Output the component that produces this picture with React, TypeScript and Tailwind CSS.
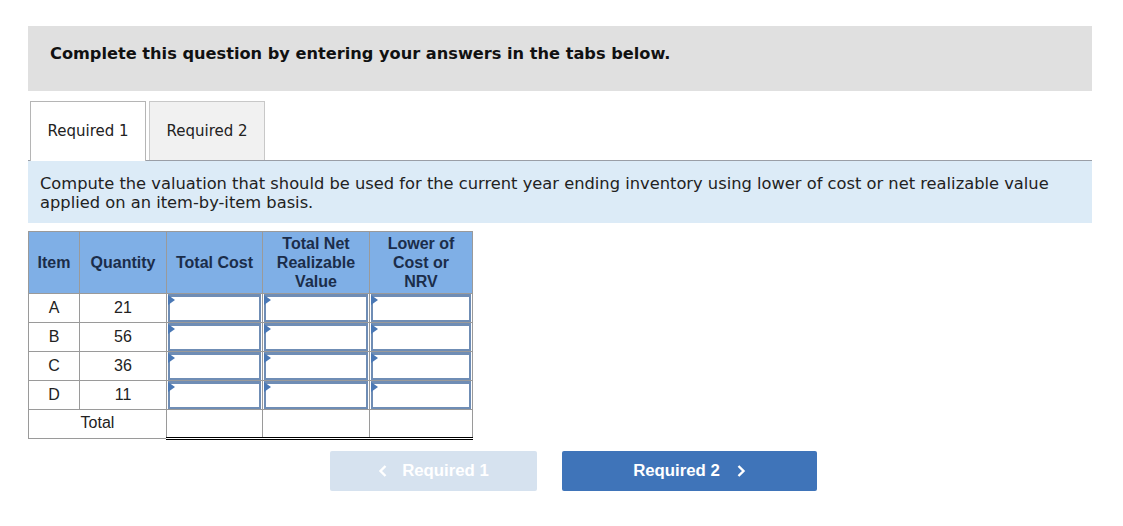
import React from "react";

const rows = [
  { item: "A", qty: "21" },
  { item: "B", qty: "56" },
  { item: "C", qty: "36" },
  { item: "D", qty: "11" },
];

function InputCell() {
  return (
    <td className="border border-[#9a9a9a] p-0 h-[29px] align-top">
      <div className="relative h-[28px] mx-[1px] border-2 border-t-[3px] border-[#6f8db5] bg-white">
        <div className="absolute left-[-2px] top-[-2px] w-0 h-0 border-t-[5px] border-b-[5px] border-l-[7px] border-t-transparent border-b-transparent border-l-[#4a78b5]" />
      </div>
    </td>
  );
}

export default function App() {
  return (
    <div className="w-[1123px] h-[526px] bg-white relative" style={{ fontFamily: "'DejaVu Sans', Verdana, sans-serif" }}>
      <div className="pt-[26px] pl-[28px] w-[1092px]">
        <div className="h-[65px] bg-[#e0e0e0] pl-[22px] pt-[16px]">
          <span className="font-bold text-[16.2px] text-[#111]">Complete this question by entering your answers in the tabs below.</span>
        </div>

        <div className="mt-[10px] flex border-b border-[#9a9ea6] pl-[2px] h-[60px]">
          <div className="w-[116px] h-[60px] bg-white border border-b-0 border-[#b5b5b5] flex items-center justify-center text-[15px] text-[#222] mb-[-1px]">
            Required 1
          </div>
          <div className="ml-[3px] w-[116px] h-[59px] bg-[#f1f1f1] border border-b-0 border-[#c8c8c8] flex items-center justify-center text-[15px] text-[#222]">
            Required 2
          </div>
        </div>

        <div className="bg-[#dcebf7] h-[62px] pl-[12px] pt-[13px] text-[16.3px] leading-[19px] text-[#222]">
          Compute the valuation that should be used for the current year ending inventory using lower of cost or net realizable value
          <br />
          applied on an item-by-item basis.
        </div>

        <div className="mt-[8px]" style={{ fontFamily: "'Liberation Sans', Arial, sans-serif" }}>
          <table className="border-collapse text-[16px] text-[#222]">
            <colgroup>
              <col className="w-[51px]" />
              <col className="w-[87px]" />
              <col className="w-[96px]" />
              <col className="w-[107px]" />
              <col className="w-[103px]" />
            </colgroup>
            <thead>
              <tr className="bg-[#7fafe6] h-[62px] font-bold text-[#1b2d4a] leading-[19px]">
                <th className="border border-[#9a9a9a] font-bold p-0">Item</th>
                <th className="border border-[#9a9a9a] font-bold p-0">Quantity</th>
                <th className="border border-[#9a9a9a] font-bold p-0">Total Cost</th>
                <th className="border border-[#9a9a9a] font-bold p-0">Total Net<br />Realizable<br />Value</th>
                <th className="border border-[#9a9a9a] font-bold p-0">Lower of<br />Cost or<br />NRV</th>
              </tr>
            </thead>
            <tbody>
              {rows.map((r) => (
                <tr key={r.item} className="h-[29px]">
                  <td className="border border-[#9a9a9a] text-center p-0">{r.item}</td>
                  <td className="border border-[#9a9a9a] text-center p-0">{r.qty}</td>
                  <InputCell />
                  <InputCell />
                  <InputCell />
                </tr>
              ))}
              <tr className="h-[29px]">
                <td colSpan={2} className="border border-[#9a9a9a] text-center p-0 pb-[3px]">Total</td>
                <td className="border border-[#9a9a9a] border-t-black border-b-[3px] border-b-black p-0" style={{ borderStyle: "solid solid double solid" }}></td>
                <td className="border border-[#9a9a9a] border-t-black border-b-[3px] border-b-black p-0" style={{ borderStyle: "solid solid double solid" }}></td>
                <td className="border border-[#9a9a9a] border-t-black border-b-[3px] border-b-black p-0" style={{ borderStyle: "solid solid double solid" }}></td>
              </tr>
            </tbody>
          </table>
        </div>

        <div className="mt-[11px] flex" style={{ fontFamily: "'Liberation Sans', Arial, sans-serif" }}>
          <div className="ml-[302px] w-[207px] h-[40px] rounded-[2px] bg-[#d6e2ef] flex items-center justify-center text-white font-bold text-[16.8px]">
            <svg width="10" height="14" viewBox="0 0 10 14" className="mr-[14px]"><path d="M7.5 2 L2.5 7 L7.5 12" stroke="white" strokeWidth="2.4" fill="none" /></svg>
            Required 1
          </div>
          <div className="ml-[25px] w-[255px] h-[40px] rounded-[2px] bg-[#3f74b9] flex items-center justify-center text-white font-bold text-[16.8px]">
            Required 2
            <svg width="10" height="14" viewBox="0 0 10 14" className="ml-[16px]"><path d="M2.5 2 L7.5 7 L2.5 12" stroke="white" strokeWidth="2.4" fill="none" /></svg>
          </div>
        </div>
      </div>
    </div>
  );
}
